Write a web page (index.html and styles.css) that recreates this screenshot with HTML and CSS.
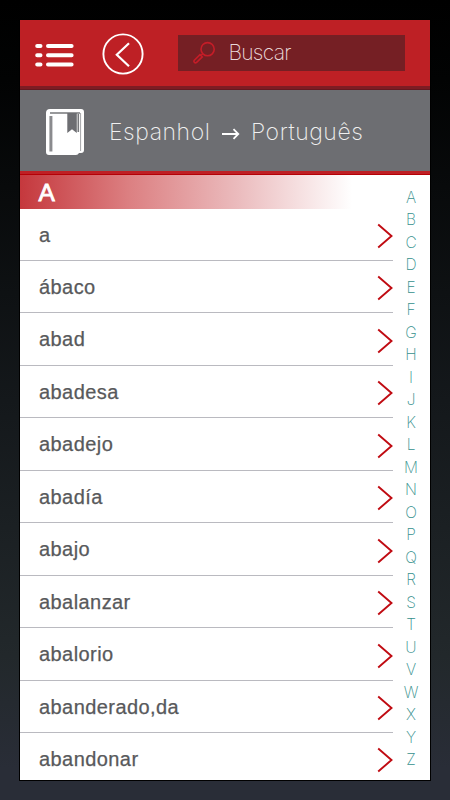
FILE: index.html
```
<!DOCTYPE html>
<html lang="pt">
<head>
<meta charset="utf-8">
<title>Dicionário</title>
<link rel="stylesheet" href="styles.css">
</head>
<body>
<svg class="defs" width="0" height="0"><symbol id="chevron" viewBox="0 0 16 26"><path d="M1.2 1.5 14.5 13 1.2 24.5" fill="none" stroke="#c00b12" stroke-width="1.9"/></symbol></svg>
<main class="app">
<header class="topbar">
<svg class="menu" viewBox="0 0 39 24" fill="none" stroke="#fff" stroke-width="4" stroke-linecap="round"><path d="M2.2 3H5.5M13 3H36.6M2.2 12.2H5.5M13 12.2H36.6M2.2 21.4H5.5M13 21.4H36.6"/></svg>
<svg class="back" viewBox="0 0 42 42" fill="none" stroke="#fff" stroke-width="1.9"><circle cx="21" cy="21" r="19.6"/><path d="M27 10.2 14.8 21.8 27 33.2" stroke-width="2.2"/></svg>
<div class="search"><svg class="lens" viewBox="0 0 24 24" fill="none" stroke="#c51d28" stroke-width="1.6"><circle cx="15.6" cy="8.2" r="6.6"/><path d="m10.7 12.8-1.7 1.6M8 13.6l2.3 2.3-5.9 5.7q-1.1.7-2-.2t-.3-2z"/></svg><span>Buscar</span></div>
</header>
<section class="language">
<svg class="book" viewBox="0 0 40 48"><path d="M5 1H36Q39 1 39 4V42Q39 45 36 45H34Q33 47 31 47H4Q1 47 1 44V5Q1 1 5 1Z" fill="#fff"/><path d="M5 5H35M33.3 6V24" fill="none" stroke="#77787b" stroke-width="1.6"/><path d="M35.6 5V43" stroke="#a4a5a8" stroke-width="1"/><path d="M5.9 8V43.5" stroke="#8a8b8e" stroke-width="3"/><path d="M22.3 5H31.8V25L27 21.2 22.3 25Z" fill="#6d6e72"/></svg>
<span class="from">Espanhol</span>
<svg class="arrow" viewBox="0 0 18 12" fill="none" stroke="#fff" stroke-width="1.8"><path d="M0 6H16M11.5 1.2 16.3 6 11.5 10.8"/></svg>
<span class="to">Português</span>
</section>
<div class="content">
<section class="words">
<h1>A</h1>
<ul>
<li>a<svg><use href="#chevron"/></svg></li>
<li>ábaco<svg><use href="#chevron"/></svg></li>
<li>abad<svg><use href="#chevron"/></svg></li>
<li>abadesa<svg><use href="#chevron"/></svg></li>
<li>abadejo<svg><use href="#chevron"/></svg></li>
<li>abadía<svg><use href="#chevron"/></svg></li>
<li>abajo<svg><use href="#chevron"/></svg></li>
<li>abalanzar<svg><use href="#chevron"/></svg></li>
<li>abalorio<svg><use href="#chevron"/></svg></li>
<li>abanderado,da<svg><use href="#chevron"/></svg></li>
<li>abandonar<svg><use href="#chevron"/></svg></li>
</ul>
</section>
<nav class="index"><span>A</span><span>B</span><span>C</span><span>D</span><span>E</span><span>F</span><span>G</span><span>H</span><span>I</span><span>J</span><span>K</span><span>L</span><span>M</span><span>N</span><span>O</span><span>P</span><span>Q</span><span>R</span><span>S</span><span>T</span><span>U</span><span>V</span><span>W</span><span>X</span><span>Y</span><span>Z</span></nav>
</div>
</main>
</body>
</html>
```
FILE: styles.css
```
* { box-sizing: border-box; }
body { margin: 0; height: 800px; padding: 20px; overflow: hidden; background: linear-gradient(#000 0, #020303 10%, #14181b 50%, #22282b 82%, #292d37 96%); font-family: "Liberation Sans", sans-serif; }
.defs { display: block; }
svg { flex: none; }
.app { width: 410px; height: 760px; background: #fff; overflow: hidden; outline: 1px solid #000; }
.topbar { height: 70px; display: flex; align-items: flex-start; background: linear-gradient(#be2025 0 66px, #7d1c23 66px 69px, #651820 69px); }
.menu { width: 39px; height: 24px; margin: 23px 0 0 15px; }
.back { width: 42px; height: 42px; margin: 13px 0 0 27.5px; }
.search { width: 227.5px; height: 36px; margin: 15px 0 0 34px; padding-left: 14px; display: flex; align-items: center; background: #751f24; color: #ead9da; font: 200 21px/36px Inter, sans-serif; letter-spacing: -.75px; }
.lens { width: 24px; height: 24px; margin-right: 13px; }
.language { height: 85px; display: flex; align-items: center; background: linear-gradient(#6d6e72 0 81px, #be2025 81px 84px, #b50006 84px); color: #f0f0f0; font: 200 23px/30px Inter, sans-serif; letter-spacing: .55px; padding-bottom: 2px; }
.book { width: 40px; height: 48px; margin: 0 1px 0 24.5px; }
.from { width: 101px; margin-left: 23.5px; white-space: nowrap; }
.arrow { width: 18px; height: 12px; margin: 4px 0 0 12px; }
.to { margin-left: 11px; white-space: nowrap; }
.content { display: flex; height: 605px; }
.words { width: 372.5px; }
h1 { width: 332px; height: 33.5px; margin: 0; padding-left: 18.5px; background: linear-gradient(90deg, #c5383d, #dc8082 33%, #ebbcbe 66%, #fff); color: #fff; font: 400 24.5px/36px "Liberation Sans", sans-serif; -webkit-text-stroke: .8px #fff; }
ul { list-style: none; margin: 0; padding: 0; }
li { height: 52.48px; display: flex; justify-content: space-between; padding-left: 19px; border-bottom: 1px solid #babac0; color: #58595b; font-size: 20px; line-height: 52px; letter-spacing: .43px; -webkit-text-stroke: .25px #58595b; }
li svg { width: 16px; height: 26px; margin-top: 14.3px; }
.index { width: 37px; padding-top: 11.5px; display: flex; flex-direction: column; align-items: center; color: #35908d; font: 200 15.5px/22.5px Inter, sans-serif; }
.index span { height: 22.5px; }
```
